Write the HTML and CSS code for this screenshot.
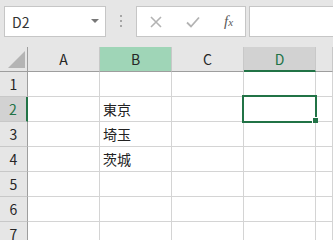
FILE: index.html
```html
<!DOCTYPE html>
<html lang="ja">
<head>
    <meta charset="UTF-8">
    <title>Sheet</title>
    <link rel="stylesheet" href="styles.css">
</head>
<body>
    <!-- 名前ボックスと数式バー -->
    <div class="toolbar">
        <div class="namebox">
            <span>D2</span>
            <span class="arrow"></span>
        </div>
        <div class="dots">
            <span></span><span></span><span></span>
        </div>
        <div class="buttons">
            <svg class="btn" width="12" height="12" viewBox="0 0 12 12">
                <path d="M1 1 L11 11 M11 1 L1 11" stroke="#b3b3b3" stroke-width="1.6" fill="none"/>
            </svg>
            <svg class="btn" width="14" height="12" viewBox="0 0 14 12">
                <path d="M1 6.5 L5 10.5 L13 1.5" stroke="#b3b3b3" stroke-width="1.8" fill="none"/>
            </svg>
            <span class="fx">f<small>x</small></span>
        </div>
        <div class="formula"></div>
    </div>

    <!-- シート -->
    <div class="sheet">
        <div class="corner"><span class="tri"></span></div>
        <div class="colhead">A</div>
        <div class="colhead picked">B</div>
        <div class="colhead">C</div>
        <div class="colhead current">D</div>
        <div class="colhead"></div>

        <div class="rowhead">1</div>
        <div class="cell"></div><div class="cell"></div><div class="cell"></div><div class="cell"></div><div class="cell"></div>

        <div class="rowhead current">2</div>
        <div class="cell"></div><div class="cell">東京</div><div class="cell"></div>
        <div class="cell active"><span class="sel"></span><span class="handle"></span></div>
        <div class="cell"></div>

        <div class="rowhead">3</div>
        <div class="cell"></div><div class="cell">埼玉</div><div class="cell"></div><div class="cell"></div><div class="cell"></div>

        <div class="rowhead">4</div>
        <div class="cell"></div><div class="cell">茨城</div><div class="cell"></div><div class="cell"></div><div class="cell"></div>

        <div class="rowhead">5</div>
        <div class="cell"></div><div class="cell"></div><div class="cell"></div><div class="cell"></div><div class="cell"></div>

        <div class="rowhead">6</div>
        <div class="cell"></div><div class="cell"></div><div class="cell"></div><div class="cell"></div><div class="cell"></div>

        <div class="rowhead">7</div>
        <div class="cell"></div><div class="cell"></div><div class="cell"></div><div class="cell"></div><div class="cell"></div>
    </div>
</body>
</html>
```

FILE: styles.css
```css
body {
    margin: 0;
    background-color: #ffffff;
    font-family: "Noto Sans CJK JP", "Noto Sans", sans-serif;
    color: #262626;
    overflow: hidden;
}
.toolbar {
    display: flex;
    align-items: flex-start;
    height: 47px;
    padding: 6px 0 0 4px;
    box-sizing: border-box;
    background-color: #e6e6e6;
}
.namebox {
    display: flex;
    align-items: center;
    justify-content: space-between;
    width: 102px;
    height: 31px;
    padding: 0 6px 0 7px;
    box-sizing: border-box;
    background: #fff;
    border: 1px solid #c6c6c6;
    font-size: 14px;
    color: #333;
}
.arrow {
    width: 0;
    height: 0;
    border-left: 4px solid transparent;
    border-right: 4px solid transparent;
    border-top: 4px solid #777;
    margin-bottom: 2px;
}
.dots {
    display: flex;
    flex-direction: column;
    gap: 3px;
    width: 30px;
    align-items: center;
    padding-top: 9px;
}
.dots span {
    width: 2px;
    height: 2px;
    background: #a6a6a6;
}
.buttons {
    display: flex;
    align-items: center;
    width: 110px;
    height: 31px;
    box-sizing: border-box;
    background: #fff;
    border: 1px solid #c6c6c6;
    padding-left: 13px;
}
.btn {
    margin-right: 24px;
}
.fx {
    font-family: "Liberation Serif", serif;
    font-style: italic;
    font-size: 15px;
    color: #5a5a5a;
}
.fx small {
    font-size: 11px;
}
.formula {
    flex: 1;
    height: 31px;
    margin-left: 3px;
    box-sizing: border-box;
    background: #fff;
    border: 1px solid #c6c6c6;
    border-right: none;
}
.sheet {
    display: grid;
    grid-template-columns: 28px repeat(4, 72px) 1fr;
    grid-template-rows: 25px repeat(7, 25px);
    height: 193px;
    overflow: hidden;
}
.sheet > div {
    box-sizing: border-box;
}
.corner {
    position: relative;
    background: #e6e6e6;
    border-right: 1px solid #9e9e9e;
    border-bottom: 1px solid #9e9e9e;
}
.tri {
    position: absolute;
    left: 8px;
    top: 4px;
    width: 17px;
    height: 17px;
    background: #b4b4b4;
    clip-path: polygon(100% 0, 100% 100%, 0 100%);
}
.colhead {
    display: flex;
    align-items: center;
    justify-content: center;
    background: #e6e6e6;
    border-right: 1px solid #c8c8c8;
    border-bottom: 1px solid #9e9e9e;
    font-size: 14px;
    color: #262626;
}
.colhead.picked {
    background: #9fd5b7;
}
.colhead.current {
    background: #d2d2d2;
    color: #217346;
    border-bottom: 2px solid #217346;
}
.rowhead {
    display: flex;
    align-items: center;
    justify-content: center;
    background: #e6e6e6;
    border-right: 1px solid #9e9e9e;
    border-bottom: 1px solid #c8c8c8;
    font-size: 14px;
    color: #262626;
}
.rowhead.current {
    background: #d2d2d2;
    color: #217346;
    border-right: 2px solid #217346;
}
.cell {
    display: flex;
    align-items: center;
    padding-left: 3px;
    border-right: 1px solid #d4d4d4;
    border-bottom: 1px solid #d4d4d4;
    font-size: 14px;
    color: #222;
}
.cell.active {
    position: relative;
}
.sel {
    position: absolute;
    left: -2px;
    top: -2px;
    right: -2px;
    bottom: -2px;
    border: 2px solid #217346;
    z-index: 2;
}
.handle {
    position: absolute;
    right: -3px;
    bottom: -2px;
    width: 5px;
    height: 5px;
    background: #217346;
    border-left: 1px solid #fff;
    border-top: 1px solid #fff;
    z-index: 3;
}
```
